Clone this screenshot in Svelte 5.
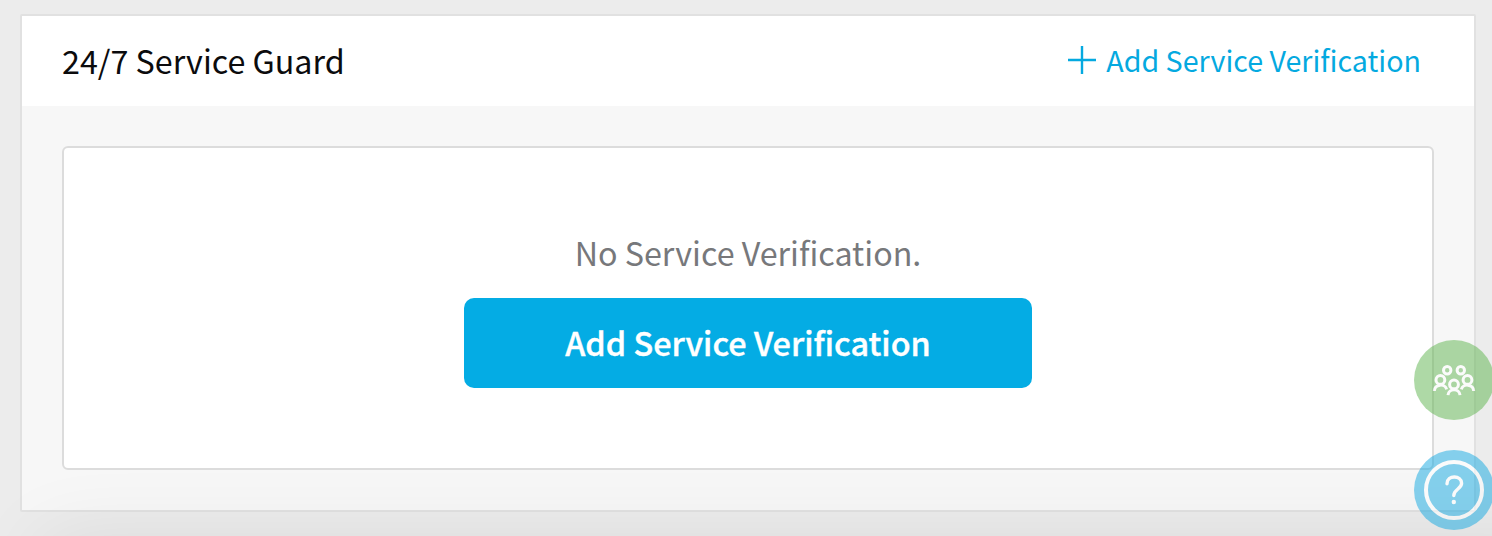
<script>
  const action = 'Add Service Verification';
</script>

<main>
  <section class="panel">
    <header>
      <h1>24/7 Service Guard</h1>
      <button class="link">
        <svg width="28" height="28" viewBox="0 0 28 28" aria-hidden="true">
          <path d="M14 0V28M0 14H28" stroke="currentColor" stroke-width="2.4" fill="none" />
        </svg>
        <span>{action}</span>
      </button>
    </header>
    <div class="body">
      <div class="card">
        <p>No Service Verification.</p>
        <button class="primary"><span>{action}</span></button>
      </div>
    </div>
  </section>
  <div class="below"></div>
  <div class="floating">
    <button class="round green" aria-label="Community">
      <svg width="80" height="80" viewBox="0 0 80 80" fill="none" stroke="#fff" stroke-width="3">
        <circle cx="33.2" cy="30.3" r="3.7" />
        <circle cx="46.8" cy="30.3" r="3.7" />
        <circle cx="26.4" cy="39.9" r="4.4" />
        <circle cx="53.5" cy="39.9" r="4.4" />
        <circle cx="40" cy="44.4" r="4.4" />
        <path d="M20.3 51C20.6 43.8 31.2 43.2 32.6 49.3M47.4 49.3C48.8 43.2 59.4 43.8 59.7 51M34 55.2C34.4 48 45.6 48 46 55.2" />
      </svg>
    </button>
    <button class="round blue" aria-label="Help">
      <svg width="80" height="80" viewBox="0 0 80 80" fill="none" stroke="#fff">
        <circle cx="40" cy="40" r="28" stroke-width="4" />
        <path d="M33 33.7C33 24.8 47.6 24.8 47.6 33.3C47.6 38.9 39.8 39.2 39.8 45.5" stroke-width="3.4" stroke-linecap="round" />
        <circle cx="39.8" cy="52" r="2.2" fill="#fff" stroke="none" />
      </svg>
    </button>
  </div>
</main>

<style>
  :global(body) { margin: 0; overflow: hidden; }
  main {
    position: relative;
    box-sizing: border-box;
    height: 536px;
    padding: 14px 16px 24px 20px;
    overflow: hidden;
    background: #ececec;
    font-family: "Noto Sans CJK SC", "Open Sans", sans-serif;
  }
  button { border: 0; padding: 0; margin: 0; background: none; font-family: inherit; }
  .panel {
    box-sizing: border-box;
    height: 498px;
    border: 2px solid #e1e1e1;
    border-radius: 2px;
    background: #f7f7f7;
  }
  header {
    box-sizing: border-box;
    display: flex;
    align-items: center;
    justify-content: space-between;
    height: 90px;
    padding: 0 53px 2px 40px;
    background: #fff;
  }
  h1 { margin: 0; font-size: 32.25px; line-height: 48px; font-weight: 400; color: #0b0b0d; white-space: nowrap; }
  .link { display: flex; align-items: center; gap: 10px; color: #04a9e0; font-size: 28.65px; line-height: 44px; white-space: nowrap; }
  .body { padding: 40px; }
  .card {
    box-sizing: border-box;
    display: flex;
    flex-direction: column;
    align-items: center;
    height: 324px;
    padding-top: 80px;
    border: 2px solid #dcdcdc;
    border-radius: 6px;
    background: #fff;
  }
  p { margin: 0 0 22px; font-size: 32.25px; line-height: 48px; color: #77787b; white-space: nowrap; }
  .primary {
    width: 568px;
    height: 90px;
    padding-bottom: 2px;
    border-radius: 10px;
    background: #04ace4;
    color: #fff;
    font-size: 32.4px;
    line-height: 48px;
    font-weight: 500;
    -webkit-text-stroke: 0.4px #fff;
    white-space: nowrap;
  }
  .below {
    position: absolute;
    left: 40px;
    right: -80px;
    top: 536px;
    height: 200px;
    box-shadow: 0 0 80px rgba(0, 0, 0, 0.075);
  }
  .floating { position: absolute; left: 1414px; top: 340px; display: grid; gap: 30px; }
  .round { width: 80px; height: 80px; border-radius: 50%; opacity: 0.5; }
  .round svg { display: block; }
  .green { background: #5fb54f; }
  .blue { background: #13a9e2; }
</style>
